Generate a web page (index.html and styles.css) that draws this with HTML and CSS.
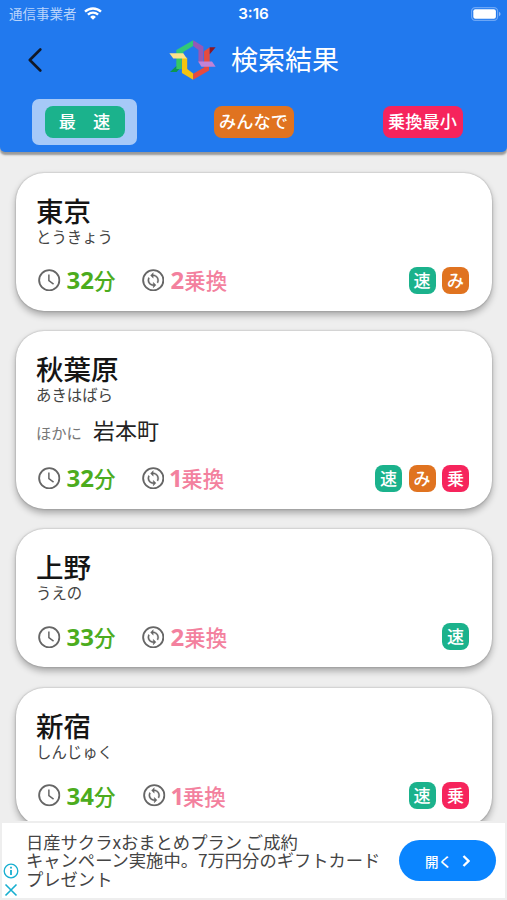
FILE: index.html
```
<!DOCTYPE html>
<html lang="ja">
<head>
<meta charset="utf-8">
<title>検索結果</title>
<link rel="stylesheet" href="styles.css">
</head>
<body>
<svg class="defs" width="0" height="0" aria-hidden="true">
  <symbol id="clock" viewBox="0 0 24 24">
    <circle cx="12" cy="12" r="10.8" fill="none" stroke="#666" stroke-width="2"/>
    <path d="M11.6 5.800v6.700l5 3.700" fill="none" stroke="#666" stroke-width="1.6"/>
  </symbol>
  <symbol id="transfer" viewBox="0 0 24 24">
    <circle cx="12" cy="12" r="10.8" fill="none" stroke="#666" stroke-width="2"/>
    <path transform="translate(3.120 3.120) scale(.74)" d="M12 4V1L8 5l4 4V6c3.310 0 6 2.690 6 6 0 1.010-.25 1.970-.7 2.800l1.460 1.460C19.540 15.030 20 13.570 20 12c0-4.420-3.580-8-8-8zm0 14c-3.310 0-6-2.690-6-6 0-1.010.25-1.970.7-2.800L5.240 7.740C4.460 8.970 4 10.430 4 12c0 4.420 3.580 8 8 8v3l4-4-4-4v3z" fill="#666" stroke="#666" stroke-width=".4"/>
  </symbol>
</svg>
<div class="screen">
  <header class="header">
    <div class="status">
      <div class="carrier"><span>通信事業者</span>
        <svg class="wifi" viewBox="0 0 18 13"><path d="M1 4.7a11.6 11.6 0 0 1 16 0M3.9 7.7a7.4 7.4 0 0 1 10.2 0" fill="none" stroke="#fff" stroke-width="2.3"/><path d="M9 12.8L6.1 9.9a4.2 4.2 0 0 1 5.8 0z" fill="#fff"/></svg>
      </div>
      <div class="time">3:16</div>
      <svg class="battery" viewBox="0 0 30 14"><rect x=".6" y=".6" width="26" height="12.8" rx="3.6" fill="none" stroke="#6ba6f6" stroke-width="1.200"/><rect x="2.3" y="2.3" width="22.6" height="9.4" rx="2" fill="#fff"/><path d="M28 4.8q1.6.7 1.6 2.2t-1.6 2.2z" fill="#8cb8f8"/></svg>
    </div>
    <div class="titlebar">
      <svg class="back" viewBox="0 0 14 24"><path d="M12.3 1.500L1.800 12l10.500 10.500" fill="none" stroke="#111827" stroke-width="2.600" stroke-linecap="round" stroke-linejoin="round"/></svg>
      <div class="brand">
        <svg class="logo" viewBox="27 30 142 121">
          <path d="M49 72h16v46l-16 2z" fill="#37c763"/>
          <path d="M30 127l19-18v9h9l-8 9z" fill="#0d9650"/>
          <path d="M100 31v17L70 66v6H49V60z" fill="#32c878"/>
          <path d="M66 84h16v34l18 13v19l-34-20z" fill="#f5c410"/>
          <path d="M28 70h42l11 16H40z" fill="#fbe38b"/>
          <path d="M100 31l31 19v47h-15V60l-16-12z" fill="#9758b5"/>
          <path d="M133 64l17-12v45h-17zM133 109h15v13l-48 28v-18l33-19z" fill="#e64b3f"/>
          <path d="M150 52h18l-18 21z" fill="#8e1724"/>
          <path d="M115 95h42l11 16h-43z" fill="#c183d6"/>
        </svg>
        <h1>検索結果</h1>
      </div>
    </div>
    <nav class="tabs">
      <div class="tab active"><span class="pill fast">最　速</span></div>
      <div class="tab"><span class="pill all">みんなで</span></div>
      <div class="tab"><span class="pill least">乗換最小</span></div>
    </nav>
  </header>
  <main class="list">
    <section class="card">
      <h2>東京</h2><p class="kana">とうきょう</p>
      <div class="info"><svg><use href="#clock"/></svg><b class="mins">32<span>分</span></b><svg><use href="#transfer"/></svg><b class="change">2<span>乗換</span></b>
        <div class="badges"><i class="fast">速</i><i class="all">み</i></div></div>
    </section>
    <section class="card tall">
      <h2>秋葉原</h2><p class="kana">あきはばら</p>
      <p class="also"><span>ほかに</span>岩本町</p>
      <div class="info"><svg><use href="#clock"/></svg><b class="mins">32<span>分</span></b><svg><use href="#transfer"/></svg><b class="change one">1<span>乗換</span></b>
        <div class="badges"><i class="fast">速</i><i class="all">み</i><i class="least">乗</i></div></div>
    </section>
    <section class="card">
      <h2>上野</h2><p class="kana">うえの</p>
      <div class="info"><svg><use href="#clock"/></svg><b class="mins">33<span>分</span></b><svg><use href="#transfer"/></svg><b class="change">2<span>乗換</span></b>
        <div class="badges"><i class="fast">速</i></div></div>
    </section>
    <section class="card">
      <h2>新宿</h2><p class="kana">しんじゅく</p>
      <div class="info"><svg><use href="#clock"/></svg><b class="mins wide">34<span>分</span></b><svg><use href="#transfer"/></svg><b class="change one">1<span>乗換</span></b>
        <div class="badges"><i class="fast">速</i><i class="least">乗</i></div></div>
    </section>
  </main>
  <aside class="ad">
    <div class="marks">
      <svg viewBox="0 0 16 16"><circle cx="8" cy="8" r="6.8" fill="none" stroke="#17afd0" stroke-width="1.3"/><path d="M8 7v5M8 3.8v1.8" stroke="#17afd0" stroke-width="1.8"/></svg>
      <svg viewBox="0 0 16 16"><path d="M2.500 2.500l11 11M13.500 2.500l-11 11" stroke="#17afd0" stroke-width="1.6"/></svg>
    </div>
    <p class="copy">日産サクラxおまとめプラン ご成約<br>キャンペーン実施中。7万円分のギフトカード<br>プレゼント</p>
    <div class="open"><span>開く</span><svg viewBox="0 0 8 12"><path d="M1.500 1L6.500 6l-5 5" fill="none" stroke="#fff" stroke-width="2.300"/></svg></div>
  </aside>
</div>
</body>
</html>
```
FILE: styles.css
```
* { box-sizing: border-box; margin: 0; padding: 0; }
body { background: #eee; font-family: "Noto Sans CJK JP", sans-serif; }
.defs { display: block; height: 0; }
.screen { width: 507px; height: 900px; display: flex; flex-direction: column; overflow: hidden; background: #eee; }
.header { flex: none; height: 151.500px; background: #2179ee; border-radius: 0 0 5px 5px; box-shadow: 0 3px 2px #999; position: relative; z-index: 1; }
.status { height: 28px; display: grid; grid-template-columns: 1fr 1fr 1fr; align-items: center; padding: 0 6px 0 9px; color: #fff; }
.carrier { display: flex; align-items: center; gap: 7px; font-size: 13.500px; line-height: 18px; color: #b9d4fb; white-space: nowrap; margin-top: -2px; }
.wifi { width: 18px; height: 13px; }
.time { text-align: center; font: 600 15.200px/20px Inter, sans-serif; margin-left: -3px; }
.battery { width: 30px; height: 14px; justify-self: end; margin-top: -1px; }
.titlebar { height: 71px; display: flex; align-items: center; padding: 0 0 8px 28px; }
.back { width: 14px; height: 24px; }
.brand { display: flex; align-items: center; margin-left: 127px; gap: 15px; }
.logo { width: 47px; height: 40px; }
h1 { font-size: 27px; line-height: 36px; font-weight: 400; color: #fff; margin-top: -1px; }
.tabs { display: grid; grid-template-columns: repeat(3, 1fr); justify-items: center; }
.tab { width: 105px; height: 46px; border-radius: 7px; display: flex; align-items: center; justify-content: center; }
.active { background: #a6c9f8; }
.pill { width: 80px; height: 32px; border-radius: 8px; color: #fff; font-size: 17.200px; line-height: 30px; font-weight: 500; text-align: center; white-space: nowrap; }
.fast { background: #1bb28c; }
.all { background: #e07320; }
.least { background: #f6245c; }
.list { flex: 1; min-height: 0; overflow: hidden; padding: 21px 15.500px 0 16px; display: flex; flex-direction: column; gap: 20.700px; }
.card { flex: none; height: 138px; border-radius: 28px; background: #fff; padding: 18px 22.500px 0 20px; box-shadow: 0 4px 7px rgba(0,0,0,.3), 0 0 2px rgba(0,0,0,.3); }
.tall { height: 177.500px; }
h2 { font-size: 27.500px; line-height: 39px; font-weight: 500; color: #151515; height: 37px; }
.kana { font-size: 15.400px; line-height: 16px; height: 17px; color: #444; }
.also { height: 39.500px; padding-top: 10px; display: flex; align-items: baseline; gap: 11px; font-size: 22px; line-height: 32px; color: #222; }
.also span { font-size: 15.300px; color: #777; }
.info { display: flex; align-items: center; height: 28px; margin-top: 21.500px; }
.info svg { flex: none; width: 22.500px; height: 22.500px; margin-left: 2px; }
.info b { font: 700 24px/28px "Noto Sans", sans-serif; white-space: nowrap; margin-left: 7px; }
.info b span { font: 500 21.500px/28px "Noto Sans CJK JP", sans-serif; }
.info .mins { width: 73px; color: #4cac1d; margin-left: 6px; }
.info .wide { width: 74.500px; }
.info .change { color: #f3819e; margin-left: 6.500px; }
.info .one { letter-spacing: -1.500px; margin-left: 5px; }
.info .one span { letter-spacing: 0; }
.badges { display: flex; gap: 6.500px; margin-left: auto; }
.badges i { width: 27px; height: 27px; border-radius: 8px; font: 500 17px/25px "Noto Sans CJK JP", sans-serif; color: #fff; text-align: center; }
.ad { flex: none; height: 79px; border: 2px solid #eee; background: #fff; display: flex; align-items: center; padding-right: 9px; position: relative; z-index: 1; }
.marks { width: 20px; align-self: flex-end; display: flex; flex-direction: column; gap: 3px; padding-left: 1px; }
.marks svg { width: 16px; height: 16px; }
.copy { width: 370px; margin-left: 4px; font-size: 17.300px; line-height: 18.300px; color: #444; white-space: nowrap; }
.open { flex: none; width: 97px; height: 41px; margin-left: auto; border-radius: 21px; background: #0a85ff; color: #fff; display: flex; align-items: center; justify-content: center; gap: 10px; font-size: 13.500px; font-weight: 500; }
.open svg { width: 8px; height: 12px; }
```
